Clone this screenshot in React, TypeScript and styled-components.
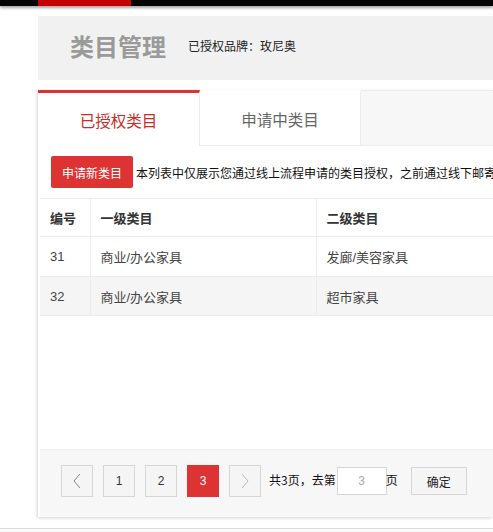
import React from 'react';
import styled, {createGlobalStyle} from 'styled-components';

const Global = createGlobalStyle`
	body {
		margin: 0;
		background: #ffffff;
		font-family: "Liberation Sans", "Noto Sans CJK SC", sans-serif;
		color: #333;
		overflow: hidden;
	}
`;

const TopBar = styled.div`
	height: 6px;
	background: #050505;
	box-shadow: 0 2px 3px rgba(0,0,0,.35);
	position: relative;
`;

const TopAccent = styled.div`
	margin-left: 38px;
	width: 93px;
	height: 6px;
	background: #c40000;
`;

const Main = styled.main`
	padding-left: 38px;
`;

const Header = styled.div`
	margin-top: 10px;
	height: 64px;
	padding: 0 0 6px 32px;
	box-sizing: border-box;
	background: #f1f1f1;
	display: flex;
	align-items: center;
	gap: 22px;
`;

const Title = styled.h1`
	margin: 0;
	font-size: 24px;
	font-weight: 700;
	color: #9a9a9a;
`;

const Brand = styled.span`
	font-size: 12px;
	color: #222;
`;

const Card = styled.section`
	margin-top: 10px;
	height: 427px;
	display: flex;
	flex-direction: column;
	background: #fff;
	box-shadow: -1px 1px 3px rgba(0,0,0,.18);
`;

const Tabs = styled.div`
	display: flex;
	height: 56px;
	flex-shrink: 0;
	background: #f7f7f7;
	border-top: 1px solid #ececec;
	border-bottom: 1px solid #ececec;
	box-sizing: border-box;
`;

const Tab = styled.div<{$active?: boolean}>`
	width: ${p => (p.$active ? '162px' : '161px')};
	display: flex;
	align-items: center;
	justify-content: center;
	background: #fff;
	font-family: "Noto Sans CJK SC", sans-serif;
	font-size: 15.5px;
	color: ${p => (p.$active ? '#c92a2a' : '#666')};
	border-top: 3px solid ${p => (p.$active ? '#d93434' : 'transparent')};
	border-right: 1px solid #ececec;
	margin-top: -1px;
	margin-bottom: ${p => (p.$active ? '-1px' : '0')};
	box-sizing: border-box;
`;

const Panel = styled.div`
	flex: 1;
	display: flex;
	flex-direction: column;
	margin-left: 2px;
	overflow: hidden;
`;

const Toolbar = styled.div`
	height: 53px;
	flex-shrink: 0;
	display: flex;
	align-items: center;
	padding-left: 11px;
	gap: 3px;
	border-bottom: 1px solid #ececec;
	box-sizing: border-box;
	white-space: nowrap;
`;

const RedButton = styled.button`
	height: 32px;
	padding: 0 11px;
	border: none;
	border-radius: 2px;
	background: #dd3333;
	color: #fff;
	font-family: "Noto Sans CJK SC", sans-serif;
	font-size: 12px;
`;

const Note = styled.span`
	font-family: "Noto Sans CJK SC", sans-serif;
	font-size: 12px;
	color: #111;
`;

const Table = styled.table`
	border-collapse: collapse;
	width: 520px;
	table-layout: fixed;
	font-family: "Liberation Sans", "Noto Sans CJK SC", sans-serif;
	font-size: 13px;
	flex-shrink: 0;
`;

const Col = styled.col<{$w?: number}>`
	width: ${p => (p.$w ? `${p.$w}px` : 'auto')};
`;

const Th = styled.th`
	height: 37px;
	padding: 0 0 0 10px;
	text-align: left;
	font-weight: 700;
	color: #333;
	border-right: 1px solid #ececec;
	border-bottom: 1px solid #ececec;
`;

const Tr = styled.tr<{$alt?: boolean}>`
	background: ${p => (p.$alt ? '#f5f5f5' : '#fff')};
`;

const Td = styled.td<{$h: number}>`
	height: ${p => p.$h}px;
	padding: 0 0 0 10px;
	color: #444;
	border-right: 1px solid #ececec;
	border-bottom: 1px solid #ececec;
`;

const Spacer = styled.div`
	flex: 1;
`;

const Pager = styled.div`
	height: 68px;
	flex-shrink: 0;
	display: flex;
	align-items: flex-start;
	padding: 15px 0 0 21px;
	box-sizing: border-box;
	background: #f7f7f7;
	border-top: 1px solid #ececec;
	font-size: 12px;
	white-space: nowrap;
`;

const PageBtn = styled.div<{$active?: boolean}>`
	width: 32px;
	height: 32px;
	margin-right: 10px;
	display: flex;
	align-items: center;
	justify-content: center;
	box-sizing: border-box;
	border: 1px solid ${p => (p.$active ? '#dd3333' : '#d6d6d6')};
	background: ${p => (p.$active ? '#dd3333' : '#f5f5f5')};
	color: ${p => (p.$active ? '#fff' : '#333')};
	font-size: 12px;
`;

const PagerText = styled.span`
	font-family: "Noto Sans CJK SC", sans-serif;
	font-size: 12px;
	line-height: 28px;
	margin-top: 1px;
	color: #111;
	margin-left: -2px;
`;

const PageInput = styled.div`
	width: 50px;
	height: 28px;
	margin: 2px 1px 0;
	box-sizing: border-box;
	border: 1px solid #d6d6d6;
	background: #fff;
	color: #aaa;
	display: flex;
	align-items: center;
	justify-content: center;
`;

const OkButton = styled.div`
	width: 56px;
	height: 28px;
	margin: 2px 0 0 13px;
	box-sizing: border-box;
	border: 1px solid #d6d6d6;
	background: #f5f5f5;
	display: flex;
	align-items: center;
	justify-content: center;
	font-family: "Noto Sans CJK SC", sans-serif;
	color: #222;
`;

const Footer = styled.div`
	margin-top: 11px;
	border-top: 1px solid #dcdcdc;
	height: 20px;
	background: #fafafa;
`;

const Chevron = ({dir}: {dir: 'l' | 'r'}) => (
	<svg width="10" height="16" viewBox="0 0 10 16">
		<path
			d={dir === 'l' ? 'M8 1 L2 8 L8 15' : 'M2 1 L8 8 L2 15'}
			fill="none"
			stroke={dir === 'l' ? '#888' : '#bbb'}
			strokeWidth="1"
		/>
	</svg>
);

const rows = [
	{id: 31, first: '商业/办公家具', second: '发廊/美容家具'},
	{id: 32, first: '商业/办公家具', second: '超市家具'},
];

export default function App() {
	return (
		<>
			<Global />
			<TopBar>
				<TopAccent />
			</TopBar>
			<Main>
				<Header>
					<Title>类目管理</Title>
					<Brand>已授权品牌：玫尼奥</Brand>
				</Header>
				<Card>
					<Tabs>
						<Tab $active>已授权类目</Tab>
						<Tab>申请中类目</Tab>
					</Tabs>
					<Panel>
						<Toolbar>
							<RedButton>申请新类目</RedButton>
							<Note>本列表中仅展示您通过线上流程申请的类目授权，之前通过线下邮寄</Note>
						</Toolbar>
						<Table>
							<colgroup>
								<Col $w={50} />
								<Col $w={226} />
								<Col />
							</colgroup>
							<thead>
								<tr>
									<Th>编号</Th>
									<Th>一级类目</Th>
									<Th>二级类目</Th>
								</tr>
							</thead>
							<tbody>
								{rows.map((r, i) => (
									<Tr key={r.id} $alt={i % 2 === 1}>
										<Td $h={i === 0 ? 39 : 38}>{r.id}</Td>
										<Td $h={i === 0 ? 39 : 38}>{r.first}</Td>
										<Td $h={i === 0 ? 39 : 38}>{r.second}</Td>
									</Tr>
								))}
							</tbody>
						</Table>
						<Spacer />
						<Pager>
							<PageBtn><Chevron dir="l" /></PageBtn>
							<PageBtn>1</PageBtn>
							<PageBtn>2</PageBtn>
							<PageBtn $active>3</PageBtn>
							<PageBtn><Chevron dir="r" /></PageBtn>
							<PagerText>共3页，去第</PagerText>
							<PageInput>3</PageInput>
							<PagerText>页</PagerText>
							<OkButton>确定</OkButton>
						</Pager>
					</Panel>
				</Card>
			</Main>
			<Footer />
		</>
	);
}
